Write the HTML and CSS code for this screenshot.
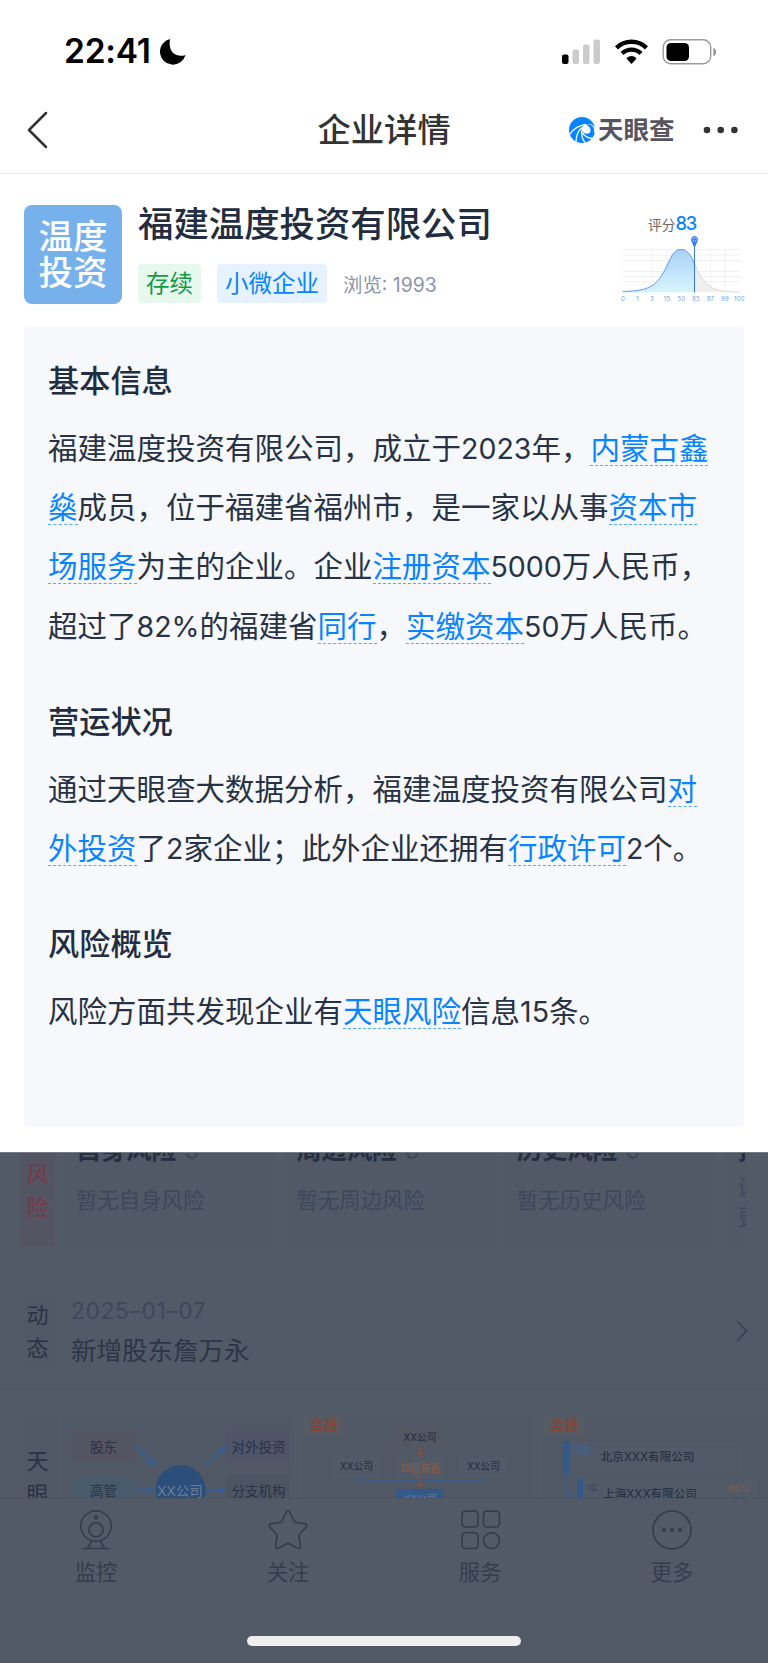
FILE: index.html
```html
<!DOCTYPE html>
<html lang="zh-CN">

<head>
    <meta charset="UTF-8">
    <meta name="viewport" content="width=device-width, initial-scale=1.0">
    <title>企业详情</title>
    <link rel="stylesheet" href="styles.css">
</head>

<body>

    <div class="sheet">
        <div class="status-bar">
            <div class="time">22:41</div>
            <svg class="moon" width="26" height="26" viewBox="0 0 26 26"><path d="M10 0 A13 13 0 1 0 25.500 16 C17 19 7.500 14 10 0Z"/></svg>
            <svg class="signals" width="156" height="26" viewBox="0 0 156 26">
                <rect x="0" y="15.500" width="6.500" height="9.500" rx="2"/>
                <g fill="#cbcbcb">
                    <rect x="10.500" y="10.500" width="6.500" height="14.500" rx="2"/>
                    <rect x="21" y="5.500" width="6.500" height="19.500" rx="2"/>
                    <rect x="31.500" y="0.500" width="6.500" height="24.500" rx="2"/>
                </g>
                <g fill="none" stroke="#000" stroke-width="4.400">
                    <path d="M54.500 8.800 C63 0.700 76 0.700 84.500 8.800"/>
                    <path d="M60 14.500 C65.500 9.300 73.500 9.300 79 14.500"/>
                </g>
                <path d="M64.500 19.500 C67.500 16.300 71.500 16.300 74.500 19.500 L69.500 25Z"/>
                <rect x="101.200" y="0.700" width="47.500" height="24" rx="7.500" fill="none" stroke="#999" stroke-width="1.400"/>
                <rect x="104.500" y="4" width="22.500" height="18" rx="4.500"/>
                <path d="M151.500 8.800 Q154 10 154 13 T151.500 17.200Z" fill="#888"/>
            </svg>
        </div>

        <div class="nav">
            <svg class="back" width="22" height="40" viewBox="0 0 22 40"><path d="M20 3 L3 20 L20 37"/></svg>
            <h1>企业详情</h1>
            <div class="brand">
                <svg width="26" height="26" viewBox="0 0 26 26">
                    <circle cx="13" cy="13" r="13" fill="#0984ff"/>
                    <path d="M27 12 C25 8 22 6.500 18 7 C14 7.500 12 10.500 13 13.500 C14 16.500 18 17.500 21.500 16 L27 15Z" fill="#fff"/>
                    <path d="M17 7.500 C22 6.500 26 10 25 14.500 C24.300 17 21.500 18 19 16.800 C22.500 16 23 10.500 17 7.500Z" fill="#0984ff"/>
                    <path d="M0.500 17.500 C4 12 9 8.500 17 7.300 M7 25 C7 18 9 14 13 10.500 M16 26 C12.500 21 12 17 13 13 M23.500 21.500 C19 21 15 19 13.500 15.500" fill="none" stroke="#fff" stroke-width="1.300"/>
                </svg>
                <span>天眼查</span>
            </div>
            <svg class="dots" width="36" height="8" viewBox="0 0 36 8"><circle cx="4" cy="4" r="3.300"/><circle cx="17.700" cy="4" r="3.300"/><circle cx="31.400" cy="4" r="3.300"/></svg>
        </div>

        <div class="company">
            <div class="company-logo">温度<br>投资</div>
            <div class="company-info">
                <h2>福建温度投资有限公司</h2>
                <div class="tags">
                    <span class="tag tag-green">存续</span>
                    <span class="tag tag-blue">小微企业</span>
                    <span class="views">浏览: 1993</span>
                </div>
            </div>
            <div class="score">
                <div class="score-title">评分<b>83</b></div>
                <svg width="128" height="66" viewBox="618 235 128 66">
                    <defs>
                        <linearGradient id="curve" x1="0" y1="0" x2="0" y2="1">
                            <stop offset="0" stop-color="#a9d1f8"/>
                            <stop offset="1" stop-color="#d8f5fc"/>
                        </linearGradient>
                    </defs>
                    <path d="M623 248.500H740M623 254H740M623 259.500H740M623 270.500H740M623 275.500H740M623 280.500H740M652 248V291M666.500 248V291M681 248V291M710.500 248V291M725 248V291" stroke="#f1f1f2" fill="none"/>
                    <path d="M694.500 263 C701 278 708 290 727 290.500 L740 291 H694.500Z" fill="#efeff0"/>
                    <path d="M623 290.500 C650 290 657 285 667 265 C672 253 675 248.500 681 248.500 C688 248.500 691 255 694.500 263 V291.500 H623Z" fill="url(#curve)"/>
                    <path d="M694.500 263 C701 278 708 290 727 290.500 L740 291" stroke="#d8d8d9" fill="none"/>
                    <path d="M623 290.500 C650 290 657 285 667 265 C672 253 675 248.500 681 248.500 C688 248.500 691 255 694.500 263" stroke="#5a9cfa" fill="none"/>
                    <path d="M694.500 242V291.500" stroke="#3478f6"/>
                    <path d="M691.300 240 a3.500 3.500 0 1 1 6.400 0 L695.500 245 H693.500Z" fill="#3478f6"/>
                    <circle cx="694.500" cy="238.500" r="1.900" fill="none" stroke="#b8e2ff" stroke-width="0.800"/>
                    <g class="axis">
                        <text x="623" y="299.500">0</text>
                        <text x="637.500" y="299.500">1</text>
                        <text x="652" y="299.500">3</text>
                        <text x="667" y="299.500">15</text>
                        <text x="681.500" y="299.500">50</text>
                        <text x="696" y="299.500">85</text>
                        <text x="710.500" y="299.500">97</text>
                        <text x="725" y="299.500">99</text>
                        <text x="739.500" y="299.500">100</text>
                    </g>
                </svg>
            </div>
        </div>

        <div class="panel">
            <h3>基本信息</h3>
            <p>福建温度投资有限公司，成立于<i>2023</i>年，<a>内蒙古鑫</a></p>
            <p><a>燊</a>成员，位于福建省福州市，是一家以从事<a>资本市</a></p>
            <p><a>场服务</a>为主的企业。企业<a>注册资本</a><i>5000</i>万人民币，</p>
            <p>超过了<i>82%</i>的福建省<a>同行</a>，<a>实缴资本</a><i>50</i>万人民币。</p>

            <h3>营运状况</h3>
            <p>通过天眼查大数据分析，福建温度投资有限公司<a>对</a></p>
            <p><a>外投资</a>了<i>2</i>家企业；此外企业还拥有<a>行政许可</a><i>2</i>个。</p>

            <h3>风险概览</h3>
            <p>风险方面共发现企业有<a>天眼风险</a>信息<i>15</i>条。</p>
        </div>
    </div>

    <div class="dimmed">
        <div class="risk-row">
            <div class="side side-red">风<br>险</div>
            <div class="risk-list">
                <div class="risk-card"><h4>自身风险 <span>0</span></h4><div>暂无自身风险</div></div>
                <div class="risk-card"><h4>周边风险 <span>0</span></h4><div>暂无周边风险</div></div>
                <div class="risk-card"><h4>历史风险 <span>0</span></h4><div>暂无历史风险</div></div>
                <div class="risk-card risk-more"><h4>打</h4><div>设<br>更</div></div>
            </div>
        </div>

        <div class="news-row">
            <div class="side">动<br>态</div>
            <div class="news">
                <div class="date">2025–01–07</div>
                <div class="news-title">新增股东詹万永</div>
            </div>
            <svg class="arrow" width="12" height="22" viewBox="0 0 12 22"><path d="M1.500 1.500 L10.500 11 L1.500 20.500"/></svg>
        </div>

        <div class="chart-row">
            <div class="side side-tall">天<br>眼</div>
            <svg class="graph" width="232" height="83" viewBox="63 1415 232 83">
                <rect x="63" y="1417" width="232" height="90" fill="#505866"/>
                <rect x="71" y="1431" width="64" height="30" rx="2" fill="#545560"/>
                <rect x="71" y="1475" width="64" height="30" rx="2" fill="#495b6b"/>
                <rect x="226" y="1431" width="64" height="30" rx="2" fill="#4f5469"/>
                <rect x="226" y="1475" width="64" height="30" rx="2" fill="#4d5562"/>
                <circle cx="180.500" cy="1490" r="25" fill="#2c4f7a"/>
                <g stroke="#345d90" stroke-width="1.800" fill="#345d90">
                    <path d="M134.500 1446 L150 1460 M134.500 1490.300H149 M205.500 1465 L221 1451.500 M205.500 1490.300H221"/>
                    <path d="M155 1464.500 L151.500 1457.500 L146.500 1463.500Z M154 1490.300 L147.500 1487 V1493.600Z M226 1446.500 L218.500 1448.500 L223 1453.500Z M225.500 1490.300 L219.500 1487 V1493.600Z" stroke-width="1"/>
                </g>
                <g class="node-text">
                    <text x="103.500" y="1451.500">股东</text>
                    <text x="103.500" y="1495.500">高管</text>
                    <text x="258.500" y="1451.500">对外投资</text>
                    <text x="258.500" y="1495.500">分支机构</text>
                    <text x="180" y="1495.500" fill="#6c7d99">XX公司</text>
                </g>
            </svg>
            <svg class="graph" width="232" height="83" viewBox="303 1415 232 83">
                <rect x="303" y="1417" width="232" height="90" fill="#505866"/>
                <path d="M303 1435.500 V1420 Q303 1415.500 308 1415.500 H339 Q344 1415.500 344 1420 V1431 Q344 1435.500 339 1435.500Z" fill="#565a62"/>
                <text class="vip" x="324" y="1430">会员</text>
                <rect x="396" y="1426.500" width="48" height="21.500" rx="2" fill="#535762"/>
                <rect x="332" y="1457" width="48" height="21" fill="#525a68"/>
                <rect x="396" y="1457" width="48" height="21" fill="#535a65"/>
                <rect x="459" y="1457" width="48" height="21" fill="#525a68"/>
                <rect x="396" y="1489" width="48" height="20" rx="2" fill="#315a8a"/>
                <path d="M357 1477 V1481 H483.500 V1477" fill="none" stroke="#345d90" stroke-width="1.600"/>
                <path d="M420.300 1448 V1453 M420.300 1478 V1485" stroke="#82523f" stroke-width="1.500"/>
                <path d="M417 1451.500 H423.600 L420.300 1457Z M417 1483.500 H423.600 L420.300 1488.500Z" fill="#82523f"/>
                <g class="node-text small">
                    <text x="420" y="1441">XX公司</text>
                    <text x="356.500" y="1470">XX公司</text>
                    <text x="483.500" y="1470">XX公司</text>
                    <text x="420" y="1471.500" fill="#8a5a45">10层穿透</text>
                    <text x="420" y="1503" fill="#63799a">XX公司</text>
                </g>
            </svg>
            <svg class="graph" width="225" height="83" viewBox="543 1415 225 83">
                <rect x="543" y="1417" width="225" height="90" fill="#505866"/>
                <path d="M543 1435.500 V1420 Q543 1415.500 548 1415.500 H579 Q584.500 1415.500 584.500 1420 V1431 Q584.500 1435.500 579 1435.500Z" fill="#565a62"/>
                <text class="vip" x="564.500" y="1430">会员</text>
                <rect x="570" y="1442" width="173" height="30" fill="#525a68"/>
                <rect x="584" y="1480" width="173" height="30" fill="#525a68"/>
                <rect x="570" y="1444" width="23" height="12" fill="#4e5b6f"/>
                <path d="M563 1441h6v32h-6z M577 1478.500h6v20h-6z" fill="#315a8a"/>
                <path d="M566 1472V1498 M566 1495.500H577" stroke="#345d90" stroke-width="1.500"/>
                <g class="node-text">
                    <text class="current" x="581" y="1452.500">当前</text>
                    <text class="level" x="592" y="1489.500">1层</text>
                    <text class="firm" x="647.500" y="1461">北京XXX有限公司</text>
                    <text class="firm" x="650" y="1498">上海XXX有限公司</text>
                    <text class="percent" x="739" y="1492">60%</text>
                    <text class="level" x="731" y="1504">600万元</text>
                </g>
            </svg>
        </div>

        <div class="tab-bar">
            <div class="tab">
                <svg width="42" height="42" viewBox="0 0 42 42"><circle cx="21" cy="17" r="15.200"/><circle cx="21" cy="20.800" r="7"/><circle cx="21" cy="8.500" r="1.300" fill="#353d4d"/><path d="M8 39.500H34 M17 31.500L13 39 M25 31.500L29 39"/></svg>
                <span>监控</span>
            </div>
            <div class="tab">
                <svg width="42" height="42" viewBox="0 0 42 42"><path d="M19.300 3 Q21 0.500 22.700 3 L27.500 13.200 L38.200 14.800 Q40.800 15.800 39 18 L31.700 26 L33.500 37.500 Q33.200 40.300 30.500 39.300 L21 34.300 L11.500 39.300 Q8.800 40.300 8.500 37.500 L10.300 26 L3 18 Q1.200 15.800 3.800 14.800 L14.500 13.200Z"/></svg>
                <span>关注</span>
            </div>
            <div class="tab">
                <svg width="42" height="42" viewBox="0 0 42 42"><rect x="3" y="2.200" width="16" height="15.800" rx="3.500"/><rect x="24.500" y="2.200" width="16" height="15.800" rx="3.500"/><rect x="3" y="23.700" width="16" height="15.800" rx="3.500"/><circle cx="32.500" cy="31.600" r="8"/></svg>
                <span>服务</span>
            </div>
            <div class="tab">
                <svg width="42" height="42" viewBox="0 0 42 42"><circle cx="21" cy="21" r="19"/><g fill="#353d4d"><circle cx="13" cy="21" r="1.200"/><circle cx="21" cy="21" r="1.200"/><circle cx="29" cy="21" r="1.200"/></g></svg>
                <span>更多</span>
            </div>
        </div>
        <div class="home-bar"></div>
    </div>

</body>

</html>
```

FILE: styles.css
```css
* {
    box-sizing: border-box;
}

body {
    margin: 0;
    width: 768px;
    height: 1663px;
    overflow: hidden;
    background-color: #525a67;
    color: #232d40;
    font-family: Inter, "Noto Sans CJK SC", sans-serif;
}

h1, h2, h3, h4, p {
    margin: 0;
    font-weight: 500;
    white-space: nowrap;
}

svg {
    display: block;
    flex: none;
}

.sheet {
    height: 1152px;
    background-color: white;
}

.status-bar {
    height: 88px;
    padding: 38.5px 0 0 64px;
    display: flex;
}

.time {
    width: 96px;
    color: black;
    font-size: 33.5px;
    line-height: 25px;
    font-weight: 600;
    letter-spacing: -0.2px;
}

.signals {
    margin-left: 376px;
}

.nav {
    height: 86px;
    padding-bottom: 2px;
    display: grid;
    grid-template-columns: 317.5px 251.5px 134px 1fr;
    align-items: center;
    border-bottom: 1px solid #e9e9eb;
}

.back {
    margin-left: 26px;
}

.back path {
    fill: none;
    stroke: #333;
    stroke-width: 2.5;
    stroke-linecap: round;
    stroke-linejoin: round;
}

.nav h1 {
    color: #333;
    font-size: 33.3px;
    line-height: 40px;
}

.brand {
    display: flex;
    align-items: center;
    gap: 3px;
    color: #55565f;
    font-size: 25.5px;
    line-height: 30px;
    font-weight: 700;
}

.dots {
    fill: #333;
}

.company {
    height: 153px;
    padding: 31px 22px 0 24px;
    display: flex;
}

.company-logo {
    width: 98px;
    height: 99px;
    padding-top: 14px;
    border-radius: 8px;
    background-color: #77b1eb;
    color: white;
    font-size: 34.5px;
    line-height: 36px;
    font-weight: 500;
    text-align: center;
}

.company-info {
    width: 480px;
    margin-left: 16px;
}

.company-info h2 {
    height: 59px;
    font-size: 35.4px;
    line-height: 40px;
}

.tags {
    display: flex;
    align-items: center;
    gap: 16px;
}

.tag {
    height: 39px;
    padding: 0 8px;
    border-radius: 4px;
    font-size: 23.5px;
    line-height: 39px;
}

.tag-green {
    background-color: #e7f9ef;
    color: #149b43;
}

.tag-blue {
    background-color: #e6f2ff;
    color: #0984ff;
}

.views {
    color: #8c94a9;
    font-size: 19.4px;
}

.score {
    padding-top: 8px;
}

.score-title {
    height: 23px;
    padding-left: 30px;
    color: #666;
    font-size: 13.7px;
    line-height: 21px;
}

.score-title b {
    color: #0984ff;
    font-size: 18.3px;
    font-weight: 500;
    letter-spacing: -1.2px;
}

.axis text {
    fill: #6e9ce8;
    font-size: 6px;
    letter-spacing: 0.3px;
    text-anchor: middle;
}

.panel {
    height: 800px;
    margin: 0 24px;
    padding: 29px 24px 0;
    border-radius: 4px;
    background-color: #f7f8fc;
}

.panel h3 {
    margin-bottom: 13px;
    font-size: 31.2px;
    line-height: 50px;
}

.panel p + h3 {
    margin-top: 41px;
}

.panel p {
    height: 59.2px;
    font-size: 29.5px;
    line-height: 59.2px;
    font-weight: 400;
    color: #283245;
}

.panel i {
    font-style: normal;
    font-size: 28.5px;
}

.panel a {
    display: inline-block;
    height: 34px;
    border-bottom: 1px dashed #55a9ff;
    color: #0984ff;
    line-height: 32px;
}

/* page behind the sheet */
.dimmed {
    height: 511px;
    background-color: #525a67;
    border-top: 1px solid #747986;
}

.side {
    width: 35px;
    background-color: #515866;
    border-radius: 3px;
    font-size: 22px;
    line-height: 33px;
    text-align: center;
    color: #293246;
}

.risk-row {
    height: 109px;
    padding-left: 20px;
    display: flex;
    gap: 8px;
    border-bottom: 1px solid #505865;
}

.side-red {
    height: 94px;
    padding-top: 5px;
    background-color: #545563;
    color: #783847;
}

.risk-list {
    width: 683px;
    height: 94px;
    display: flex;
    gap: 8px;
    overflow: hidden;
}

.risk-card {
    flex: none;
    width: 212.5px;
    padding-left: 13px;
    background-color: #515966;
    font-size: 21.4px;
    line-height: 30px;
    color: #3d475d;
}

.risk-card h4 {
    height: 49px;
    margin-top: -17px;
    font-size: 25.2px;
    line-height: 28px;
    font-weight: 700;
    color: #252e41;
}

.risk-card h4 span {
    margin-left: 1px;
    font-size: 25.5px;
    font-weight: 400;
    color: #3d475d;
}

.risk-more div {
    margin-top: -13px;
}

.news-row {
    height: 128px;
    padding: 32px 0 0 20px;
    display: flex;
    border-bottom: 1px solid #505764;
}

.news-row .side {
    height: 75px;
    padding-top: 5px;
}

.news {
    width: 681px;
    padding-left: 16px;
}

.date {
    font-size: 22.8px;
    line-height: 33px;
    letter-spacing: 0.6px;
    color: #3d475d;
}

.news-title {
    margin-top: 4px;
    font-size: 25.5px;
    line-height: 40px;
    color: #2c3549;
}

.arrow {
    margin-top: 26px;
}

.arrow path {
    fill: none;
    stroke: #364157;
    stroke-width: 1.8;
    stroke-linecap: round;
}

.chart-row {
    height: 108px;
    padding: 25px 0 0 20px;
    display: flex;
    gap: 8px;
    overflow: hidden;
}

.side-tall {
    height: 100px;
    margin-top: 2px;
    padding-top: 28px;
}

.graph {
    overflow: hidden;
}

.node-text {
    fill: #293246;
    font-size: 13.5px;
    text-anchor: middle;
}

.small {
    font-size: 9.7px;
    font-weight: 500;
}

.current {
    fill: #3768a6;
    font-size: 7.8px;
}

.level {
    fill: #3b465d;
    font-size: 8px;
}

.firm {
    font-size: 11.6px;
    font-weight: 500;
}

.percent {
    fill: #8a5a45;
    font-size: 9.4px;
    font-weight: 500;
}

.vip {
    fill: #824736;
    font-size: 14px;
    font-weight: 700;
    text-anchor: middle;
}

.tab-bar {
    height: 137px;
    display: grid;
    grid-template-columns: repeat(4, 192px);
    border-top: 1px solid #4e5563;
}

.tab {
    padding-top: 10px;
    display: flex;
    flex-direction: column;
    align-items: center;
    font-size: 21.3px;
    line-height: 42px;
    color: #353d4d;
}

.tab svg {
    fill: none;
    stroke: #353d4d;
    stroke-width: 1.7;
    stroke-linecap: round;
    stroke-linejoin: round;
}

.home-bar {
    width: 274px;
    height: 10px;
    margin: 1px auto 0;
    border-radius: 5px;
    background-color: #efefef;
}
```
